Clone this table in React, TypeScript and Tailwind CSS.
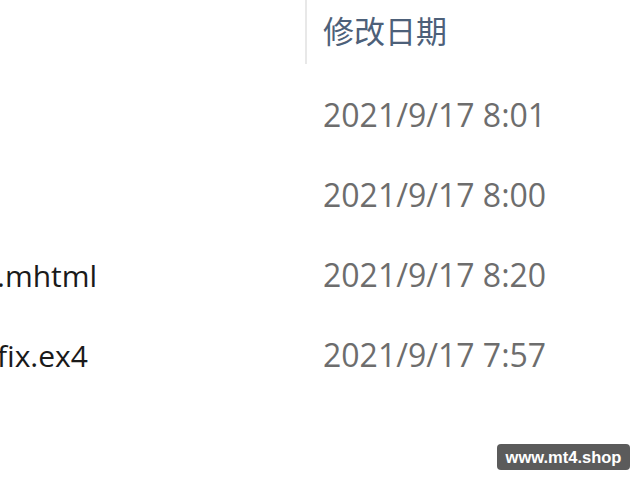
export default function App() {
  const rows = [
    { name: "", date: "2021/9/17 8:01" },
    { name: "", date: "2021/9/17 8:00" },
    { name: ".mhtml", date: "2021/9/17 8:20" },
    { name: "fix.ex4", date: "2021/9/17 7:57" },
  ];
  return (
    <div
      className="relative w-[640px] h-[480px] bg-white overflow-hidden"
      style={{ fontFamily: '"Open Sans", "Noto Sans CJK SC", sans-serif' }}
    >
      <div className="flex h-[64px]">
        <div className="w-[305px]" />
        <div className="w-[2px] bg-[#e8e8e8]" />
        <div className="pl-[16px] flex items-center text-[31px] text-[#4d6079] pb-[4px]" style={{ fontFamily: '"Noto Sans CJK SC", sans-serif' }}>
          修改日期
        </div>
      </div>
      <div className="flex flex-col pt-[11px]">
        {rows.map((r, i) => (
          <div key={i} className="flex h-[80px] items-center">
            <div className="w-[326px] -ml-[3px] text-[30px] text-[#1a1a1a]">{r.name}</div>
            <div className="text-[32px] text-[#6d6d6d]">{r.date}</div>
          </div>
        ))}
      </div>
      <div className="absolute left-[497px] top-[444px] w-[133px] h-[26px] rounded-[4px] bg-[#5b5b5b] flex items-center justify-center text-white font-bold text-[16.5px]" style={{ fontFamily: '"Liberation Sans", sans-serif' }}>
        www.mt4.shop
      </div>
    </div>
  );
}
